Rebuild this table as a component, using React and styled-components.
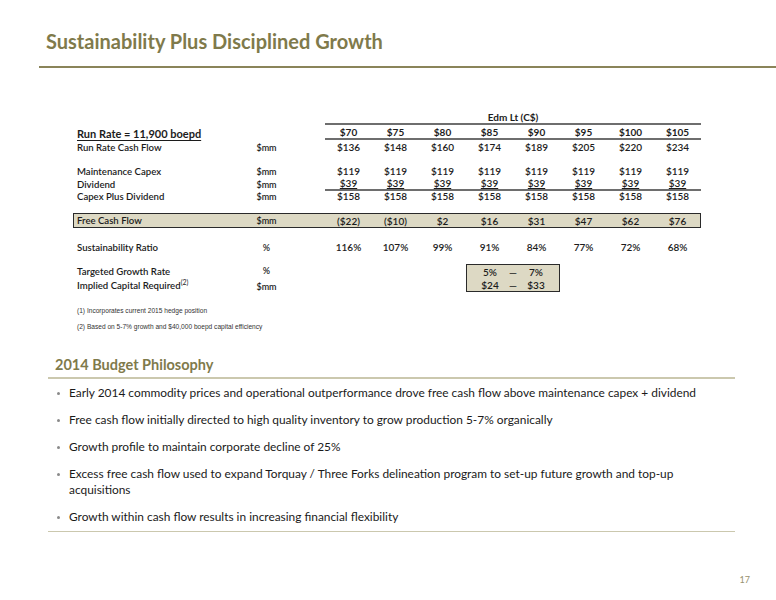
import styled, { createGlobalStyle } from "styled-components";

const GlobalStyle = createGlobalStyle`
  body {
    margin: 0;
    background: #fff;
    font-family: Lato, "Liberation Sans", sans-serif;
    color: #1c1c1c;
  }
`;

const Page = styled.div`
  width: 776px;
  height: 600px;
  background: #fff;
  display: flex;
  flex-direction: column;
  overflow: hidden;
`;

const Header = styled.header`
  padding: 29px 0 0 39px;
`;

const Title = styled.h1`
  margin: 0 0 0 7px;
  font-size: 20px;
  line-height: 24px;
  font-weight: 700;
  color: #7f7a4b;
`;

const TitleRule = styled.div`
  height: 2px;
  margin-top: 13px;
  background: #8a8459;
`;

const Table = styled.section`
  margin: 43px 0 0 74px;
  display: flex;
  flex-direction: column;
`;

const Row = styled.div`
  display: grid;
  grid-template-columns: 174px 37px 40px 376px;
  align-items: center;
  height: ${(p) => p.$h || 12}px;
  margin-top: ${(p) => p.$mt || 0}px;
  font-size: 10px;
  font-weight: 600;
  ${(p) =>
    p.$boxed &&
    `
    background: #ddd9c4;
    border: 1.5px solid #2a2a2a;
    margin-left: -1px;
    width: 628px;
    box-sizing: border-box;
  `}
`;

const Label = styled.div`
  grid-column: 1;
  padding-left: 3px;
  white-space: nowrap;
  font-size: ${(p) => (p.$big ? 11 : 9.6)}px;
  font-weight: ${(p) => (p.$big ? 700 : 600)};
  text-decoration: ${(p) => (p.$big ? "underline" : "none")};
  text-underline-offset: 2px;
  display: flex;
  flex-direction: column;
  gap: 3px;
`;

const Unit = styled.div`
  grid-column: 2;
  text-align: center;
  font-size: 9px;
  display: flex;
  flex-direction: column;
  gap: 5px;
`;

const Values = styled.div`
  grid-column: 4;
  display: grid;
  grid-template-columns: repeat(8, 47px);
  align-self: stretch;
  align-items: center;
  box-sizing: border-box;
  border-bottom: ${(p) => (p.$rule ? "2px solid #6e6e6e" : "none")};
  font-weight: ${(p) => (p.$bold ? 700 : 600)};
`;

const Val = styled.span`
  text-align: center;
  text-decoration: ${(p) => (p.$under ? "underline" : "none")};
`;

const GroupHead = styled.span`
  grid-column: 1 / -1;
  text-align: center;
  font-weight: 700;
`;

const GrowthBox = styled.div`
  grid-column: 4 / span 2;
  height: 28px;
  box-sizing: border-box;
  background: #ddd9c4;
  border: 1.5px solid #2a2a2a;
  display: grid;
  grid-template-columns: 1fr 0 1fr;
  grid-template-rows: 1fr 1fr;
  align-items: center;
  justify-items: center;
`;

const Dash = styled.span`
  display: flex;
  justify-content: center;
  width: 0;
`;

const Sup = styled.sup`
  font-size: 7px;
  font-weight: 400;
  line-height: 0;
`;

const Note = styled.p`
  margin: ${(p) => p.$mt}px 0 0 3px;
  font-family: "Liberation Sans", Arial, sans-serif;
  font-size: 6.6px;
  line-height: 12px;
  color: #333;
`;

const Philosophy = styled.section`
  margin: 23px 41px 0 48px;
`;

const SubTitle = styled.h2`
  margin: 0 0 0 7px;
  font-size: 14.5px;
  line-height: 18px;
  font-weight: 700;
  color: #7f7a4b;
`;

const LightRule = styled.div`
  height: 1.5px;
  background: #cbc8ae;
  margin-top: ${(p) => p.$mt}px;
`;

const List = styled.ul`
  list-style: none;
  margin: 6px 0 0;
  padding: 0 0 0 9px;
  display: flex;
  flex-direction: column;
  gap: 11px;
`;

const Item = styled.li`
  position: relative;
  padding-left: 12px;
  max-width: 640px;
  font-size: 11.9px;
  line-height: 16px;
  color: #1a1a1a;
  &::before {
    content: "";
    position: absolute;
    left: 0;
    top: 7px;
    width: 3px;
    height: 3px;
    border-radius: 50%;
    background: #8a8a8a;
  }
`;

const Footer = styled.footer`
  margin-top: auto;
  padding: 0 26px 15px 0;
  text-align: right;
  font-size: 9px;
  color: #98926f;
`;

const prices = ["$70", "$75", "$80", "$85", "$90", "$95", "$100", "$105"];
const cashFlow = ["$136", "$148", "$160", "$174", "$189", "$205", "$220", "$234"];
const capex = Array(8).fill("$119");
const dividend = Array(8).fill("$39");
const capexDiv = Array(8).fill("$158");
const freeCash = ["($22)", "($10)", "$2", "$16", "$31", "$47", "$62", "$76"];
const ratio = ["116%", "107%", "99%", "91%", "84%", "77%", "72%", "68%"];

const bullets = [
  "Early 2014 commodity prices and operational outperformance drove free cash flow above maintenance capex + dividend",
  "Free cash flow initially directed to high quality inventory to grow production 5-7% organically",
  "Growth profile to maintain corporate decline of 25%",
  "Excess free cash flow used to expand Torquay / Three Forks delineation program to set-up future growth and top-up acquisitions",
  "Growth within cash flow results in increasing financial flexibility",
];

function DataRow({ label, unit, values, under, rule, mt, h, boxed }) {
  return (
    <Row $mt={mt} $h={h} $boxed={boxed}>
      <Label>{label}</Label>
      <Unit>{unit}</Unit>
      <Values $rule={rule}>
        {values.map((v, i) => (
          <Val key={i} $under={under}>
            {v}
          </Val>
        ))}
      </Values>
    </Row>
  );
}

export default function App() {
  return (
    <Page>
      <GlobalStyle />
      <Header>
        <Title>Sustainability Plus Disciplined Growth</Title>
        <TitleRule />
      </Header>

      <Table>
        <Row $h={14}>
          <Values $rule $bold>
            <GroupHead>Edm Lt (C$)</GroupHead>
          </Values>
        </Row>
        <Row $h={14} $mt={1}>
          <Label $big>Run Rate = 11,900 boepd</Label>
          <Values $rule $bold>
            {prices.map((p) => (
              <Val key={p}>{p}</Val>
            ))}
          </Values>
        </Row>
        <DataRow label="Run Rate Cash Flow" unit="$mm" values={cashFlow} mt={1} />
        <DataRow label="Maintenance Capex" unit="$mm" values={capex} mt={12} />
        <DataRow label="Dividend" unit="$mm" values={dividend} under rule h={13} />
        <DataRow label="Capex Plus Dividend" unit="$mm" values={capexDiv} />
        <DataRow label="Free Cash Flow" unit="$mm" values={freeCash} mt={11} h={15} boxed />
        <DataRow label="Sustainability Ratio" unit="%" values={ratio} mt={13} />
        <Row $h={28} $mt={11}>
          <Label>
            <span>Targeted Growth Rate</span>
            <span>
              Implied Capital Required<Sup>(2)</Sup>
            </span>
          </Label>
          <Unit>
            <span>%</span>
            <span>$mm</span>
          </Unit>
          <Values>
            <GrowthBox>
              <span>5%</span>
              <Dash>—</Dash>
              <span>7%</span>
              <span>$24</span>
              <Dash>—</Dash>
              <span>$33</span>
            </GrowthBox>
          </Values>
        </Row>
        <Note $mt={13}>(1) Incorporates current 2015 hedge position</Note>
        <Note $mt={4}>(2) Based on 5-7% growth and $40,000 boepd capital efficiency</Note>
      </Table>

      <Philosophy>
        <SubTitle>2014 Budget Philosophy</SubTitle>
        <LightRule $mt={3} />
        <List>
          {bullets.map((b) => (
            <Item key={b}>{b}</Item>
          ))}
        </List>
        <LightRule $mt={6} />
      </Philosophy>

      <Footer>17</Footer>
    </Page>
  );
}
